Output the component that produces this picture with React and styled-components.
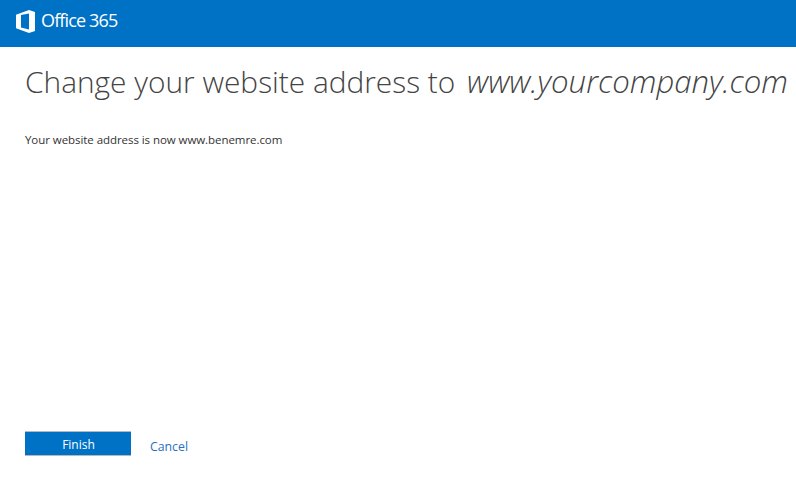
import React from "react";
import styled, { createGlobalStyle } from "styled-components";

const Global = createGlobalStyle`
  html, body { margin: 0; padding: 0; background: #fff; }
  body { font-family: "Open Sans", "Liberation Sans", sans-serif; overflow: hidden; }
`;
const Page = styled.div`
  width: 796px; height: 498px; display: flex; flex-direction: column;
`;
const Header = styled.header`
  height: 47px; background: #0072c6; display: flex; align-items: center;
  padding-left: 16px; gap: 6px; box-sizing: border-box; flex: none;
`;
const LogoText = styled.span`
  color: #fff; font-size: 18px; font-weight: 400; letter-spacing: -0.85px; line-height: 47px;
  position: relative; top: -3px;
`;
const LogoIcon = styled.svg`
  width: 19px; height: 23px; flex: none; position: relative; top: -2px;
`;
const Main = styled.main`
  flex: 1; display: flex; flex-direction: column; padding: 14px 0 0 25px; min-height: 0;
`;
const Title = styled.h1`
  margin: 0; font-size: 29.85px; font-weight: 300; line-height: 40px; color: #444;
  white-space: nowrap;
`;
const Domain = styled.em`
  font-style: italic; font-size: 31.2px; margin-left: 4px;
`;
const Message = styled.p`
  margin: 30px 0 0; font-size: 11.5px; line-height: 16px; color: #333; letter-spacing: -0.06px;
`;
const Actions = styled.div`
  margin-top: auto; margin-bottom: 42px; display: flex; align-items: center; gap: 19px;
`;
const Finish = styled.button`
  width: 106px; height: 25px; box-sizing: border-box; background: #0072c6; color: #fff;
  border: 0; border-top: 1px solid #b8b8b8; border-bottom: 1px solid #b8b8b8; padding: 1px 0 0 1px;
  font: 400 12px "Open Sans", sans-serif;
`;
const Cancel = styled.a`
  color: #2a6fc0; font-size: 12.3px; position: relative; top: 3px;
`;

export default function App() {
  return (
    <Page>
      <Global />
      <Header>
        <LogoIcon viewBox="0 0 19 23" aria-hidden="true">
          <path fill="#fff" fillRule="evenodd" d="M0 4.8 13 0 19 2V21L13 23 0 18.2ZM13 3.5 5 5V17.4L13 19.5Z" />
        </LogoIcon>
        <LogoText>Office 365</LogoText>
      </Header>
      <Main>
        <Title>Change your website address to <Domain>www.yourcompany.com</Domain></Title>
        <Message>Your website address is now www.benemre.com</Message>
        <Actions>
          <Finish>Finish</Finish>
          <Cancel>Cancel</Cancel>
        </Actions>
      </Main>
    </Page>
  );
}
